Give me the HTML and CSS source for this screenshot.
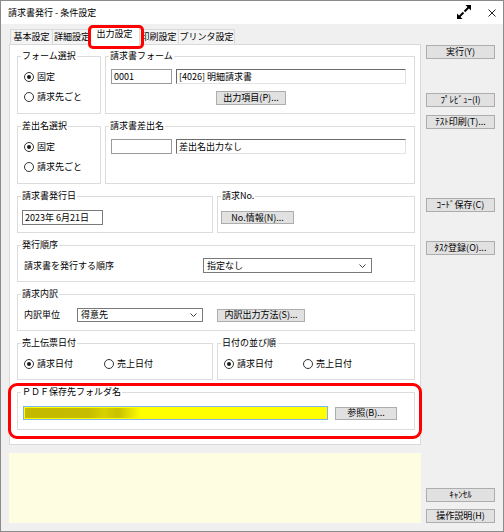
FILE: index.html
```html
<!DOCTYPE html>
<html lang="ja">
<head>
<meta charset="utf-8">
<title>請求書発行 - 条件設定</title>
<link rel="stylesheet" href="styles.css">
</head>
<body>
<div class="window">
  <div class="titlebar">
    <span class="title">請求書発行 - 条件設定</span>
    <div class="tb-icons">
      <svg class="ic-expand" width="16" height="16" viewBox="0 0 16 16">
        <line x1="8.5" y1="7.5" x2="13" y2="3" stroke="#000" stroke-width="2"/>
        <polygon points="9.5,1 15,1 15,6.5" fill="#000"/>
        <line x1="7.5" y1="8.5" x2="3" y2="13" stroke="#000" stroke-width="2"/>
        <polygon points="1,9.5 1,15 6.5,15" fill="#000"/>
      </svg>
      <svg class="ic-close" width="8" height="8" viewBox="0 0 8 8">
        <path d="M0.5 0.5 L7.5 7.5 M7.5 0.5 L0.5 7.5" stroke="#222" stroke-width="1" fill="none"/>
      </svg>
    </div>
  </div>
  <div class="client">
    <div class="main">
      <div class="tabs">
        <div class="tab t1">基本設定</div>
        <div class="tab t2">詳細設定</div>
        <div class="tab active">出力設定</div>
        <div class="tab t4">印刷設定</div>
        <div class="tab t5">プリンタ設定</div>
      </div>
      <div class="panel">
        <div class="row r-tall">
          <div class="group g-sel">
            <div class="legend">フォーム選択</div>
            <div class="radios-col">
              <div class="ritem"><span class="radio on"></span><span>固定</span></div>
              <div class="ritem"><span class="radio"></span><span>請求先ごと</span></div>
            </div>
          </div>
          <div class="group g-wide">
            <div class="legend">請求書フォーム</div>
            <div class="fields">
              <div class="field f-code">0001</div>
              <div class="field f-name sunken">[4026] 明細請求書</div>
            </div>
            <div class="btnrow"><div class="btn b-items">出力項目(P)...</div></div>
          </div>
        </div>
        <div class="row r-tall">
          <div class="group g-sel">
            <div class="legend">差出名選択</div>
            <div class="radios-col">
              <div class="ritem"><span class="radio on"></span><span>固定</span></div>
              <div class="ritem"><span class="radio"></span><span>請求先ごと</span></div>
            </div>
          </div>
          <div class="group g-wide">
            <div class="legend">請求書差出名</div>
            <div class="fields">
              <div class="field f-code"></div>
              <div class="field f-name sunken">差出名出力なし</div>
            </div>
          </div>
        </div>
        <div class="row r-short">
          <div class="group g-half-l">
            <div class="legend">請求書発行日</div>
            <div class="date-wrap"><div class="field f-date">2023年 6月21日</div></div>
          </div>
          <div class="group g-half-r">
            <div class="legend">請求No.</div>
            <div class="no-wrap"><div class="btn b-no">No.情報(N)...</div></div>
          </div>
        </div>
        <div class="row r-short">
          <div class="group g-full">
            <div class="legend">発行順序</div>
            <div class="line l-order">
              <span class="lbl lbl-order">請求書を発行する順序</span>
              <div class="select s-order"><span>指定なし</span><svg width="7" height="4" viewBox="0 0 7 4"><polyline points="0.5,0.5 3.5,3.5 6.5,0.5" fill="none" stroke="#444" stroke-width="1"/></svg></div>
            </div>
          </div>
        </div>
        <div class="row r-short">
          <div class="group g-full">
            <div class="legend">請求内訳</div>
            <div class="line l-detail">
              <span class="lbl lbl-detail">内訳単位</span>
              <div class="select s-detail"><span>得意先</span><svg width="7" height="4" viewBox="0 0 7 4"><polyline points="0.5,0.5 3.5,3.5 6.5,0.5" fill="none" stroke="#444" stroke-width="1"/></svg></div>
              <div class="btn b-detail">内訳出力方法(S)...</div>
            </div>
          </div>
        </div>
        <div class="row r-short">
          <div class="group g-half-l">
            <div class="legend">売上伝票日付</div>
            <div class="radios-row">
              <div class="ritem w80"><span class="radio on"></span><span>請求日付</span></div>
              <div class="ritem"><span class="radio"></span><span>売上日付</span></div>
            </div>
          </div>
          <div class="group g-half-r">
            <div class="legend">日付の並び順</div>
            <div class="radios-row">
              <div class="ritem w79"><span class="radio on"></span><span>請求日付</span></div>
              <div class="ritem"><span class="radio"></span><span>売上日付</span></div>
            </div>
          </div>
        </div>
        <div class="row r-pdf">
          <div class="group g-full">
            <div class="legend">ＰＤＦ保存先フォルダ名</div>
            <div class="line l-pdf">
              <div class="field f-pdf"><div class="sel-mask"></div></div>
              <div class="btn b-ref">参照(B)...</div>
            </div>
          </div>
        </div>
      </div>
      <div class="info"></div>
    </div>
    <div class="side">
      <div class="btn sb s-run">実行(Y)</div>
      <div class="btn sb s-prev">ﾌﾟﾚﾋﾞｭｰ(I)</div>
      <div class="btn sb s-test">ﾃｽﾄ印刷(T)...</div>
      <div class="btn sb s-code">ｺｰﾄﾞ保存(C)</div>
      <div class="btn sb s-task">ﾀｽｸ登録(O)...</div>
      <div class="btn sb s-cancel">ｷｬﾝｾﾙ</div>
      <div class="btn sb s-help">操作説明(H)</div>
    </div>
  </div>
  <div class="mark mark-tab"></div>
  <div class="mark mark-pdf"></div>
</div>
</body>
</html>
```
FILE: styles.css
```css
* { box-sizing: border-box; }
html, body { margin: 0; padding: 0; background: #fff; }
body {
  font-family: "Noto Sans CJK JP", "Noto Sans", sans-serif;
  font-size: 9px;
  color: #000;
  line-height: 12px;
}
.window {
  position: relative;
  width: 504px;
  height: 532px;
  border: 1px solid #8a8a8a;
  background: #f0f0f0;
  display: flex;
  flex-direction: column;
  overflow: hidden;
}
.titlebar {
  flex: none;
  height: 23px;
  background: #fff;
  display: flex;
  align-items: center;
  padding: 0 7px 0 7px;
}
.title { font-size: 9px; }
.tb-icons {
  margin-left: auto;
  display: flex;
  align-items: center;
  gap: 16px;
}
.ic-expand { display: block; margin-top: -2px; }
.ic-close { display: block; }

.client { flex: 1; display: flex; }
.main {
  width: 420px;
  padding-left: 8px;
  display: flex;
  flex-direction: column;
}
.tabs {
  height: 20px;
  display: flex;
  align-items: flex-end;
  padding-left: 1px;
  position: relative;
  z-index: 2;
}
.tab {
  height: 15px;
  border: 1px solid #d9d9d9;
  border-bottom: none;
  background: #f3f3f3;
  display: flex;
  align-items: center;
  justify-content: center;
  padding-bottom: 1px;
  white-space: nowrap;
}
.t1 { width: 43px; }
.t2 { width: 40px; margin-left: -1px; }
.tab.active {
  width: 51px;
  height: 19px;
  margin-left: -3px;
  margin-bottom: -1px;
  background: #fff;
  position: relative;
  z-index: 3;
  padding-bottom: 4px;
}
.t4 { width: 41px; margin-left: -2px; }
.t5 { width: 57px; margin-left: -1px; }

.panel {
  width: 412px;
  height: 401px;
  background: #fff;
  border: 1px solid #d9d9d9;
  padding: 11px 5px 0 7px;
  display: flex;
  flex-direction: column;
  gap: 12px;
}
.row { display: flex; gap: 4px; }
.r-tall { height: 58px; }
.r-short { height: 37px; }
.r-pdf { height: 38px; }

.group {
  border: 1px solid #dcdcdc;
  height: 100%;
}
.g-sel { width: 84px; }
.g-wide { width: 310px; }
.g-half-l { width: 196px; }
.g-half-r { width: 198px; }
.g-full { width: 398px; }

.legend {
  width: max-content;
  margin: -7px 0 -5px 3px;
  padding: 0 1px;
  background: #fff;
  line-height: 12px;
}

.radios-col {
  padding: 14px 0 0 6px;
  display: flex;
  flex-direction: column;
  gap: 8px;
}
.radios-row {
  padding: 14px 0 0 6px;
  display: flex;
}
.ritem {
  display: flex;
  align-items: center;
  gap: 3px;
  height: 12px;
  white-space: nowrap;
}
.w80 { width: 80px; }
.w79 { width: 79px; }
.radio {
  width: 10px;
  height: 10px;
  border: 1px solid #333;
  border-radius: 50%;
  background: #fff;
  display: flex;
  align-items: center;
  justify-content: center;
  flex: none;
}
.radio.on::after {
  content: "";
  width: 4px;
  height: 4px;
  border-radius: 50%;
  background: #1a1a1a;
}

.fields {
  padding: 12px 0 0 5px;
  display: flex;
  gap: 4px;
}
.field {
  height: 15px;
  background: #fff;
  border: 1px solid #9a9a9a;
  padding: 0 2px;
  line-height: 13px;
  white-space: nowrap;
  overflow: hidden;
}
.f-code { width: 61px; }
.f-name { width: 230px; }
.sunken {
  border-top-color: #6a6a6a;
  border-left-color: #6a6a6a;
  border-right-color: #e3e3e3;
  border-bottom-color: #e3e3e3;
}
.btnrow { padding: 7px 0 0 110px; }

.btn {
  height: 14px;
  background: #e1e1e1;
  border: 1px solid #adadad;
  display: flex;
  align-items: center;
  justify-content: center;
  white-space: nowrap;
  line-height: 12px;
}
.b-items { width: 70px; }

.date-wrap { padding: 13px 0 0 4px; }
.f-date { width: 81px; border-color: #7a7a7a; }
.no-wrap { padding: 14px 0 0 3px; }
.b-no { width: 73px; height: 13px; }

.line {
  display: flex;
  align-items: center;
  padding-left: 6px;
}
.l-order { padding-top: 12px; }
.l-detail { padding-top: 13px; }
.lbl { white-space: nowrap; }
.lbl-order { width: 179px; }
.lbl-detail { width: 53px; }
.select {
  height: 15px;
  background: #fff;
  border: 1px solid #7a7a7a;
  display: flex;
  align-items: center;
  justify-content: space-between;
  padding: 0 5px 0 3px;
}
.s-order { width: 169px; }
.s-detail { width: 126px; height: 14px; }
.b-detail { width: 88px; height: 13px; margin-left: 14px; }

.l-pdf { padding: 13px 0 0 5px; gap: 7px; }
.f-pdf {
  width: 305px;
  height: 14px;
  border: 1px solid #7fb2e6;
  background: #ffff00;
  padding: 1px 0 1px 1px;
}
.sel-mask {
  width: 116px;
  height: 100%;
  background: linear-gradient(to right, #c3b900 0%, #c6bc00 55%, #d8d100 68%, #c9c000 80%, #ffff00 100%);
}
.b-ref { width: 62px; height: 13px; }

.info {
  margin-top: 8px;
  width: 412px;
  height: 70px;
  background: #fffde1;
}

.side {
  flex: 1;
  padding: 0 0 8px 5px;
  display: flex;
  flex-direction: column;
}
.sb { width: 69px; flex: none; }
.s-run { margin-top: 21px; }
.s-prev { margin-top: 34px; }
.s-test { margin-top: 8px; }
.s-code { margin-top: 69px; }
.s-task { margin-top: 29px; }
.s-cancel { margin-top: auto; }
.s-help { margin-top: 7px; }

.mark {
  position: absolute;
  border: 3px solid #ff0000;
  z-index: 10;
  pointer-events: none;
}
.mark-tab {
  left: 87px;
  top: 24px;
  width: 56px;
  height: 24px;
  border-radius: 5px;
}
.mark-pdf {
  left: 7px;
  top: 382px;
  width: 414px;
  height: 56px;
  border-radius: 9px;
}
```
